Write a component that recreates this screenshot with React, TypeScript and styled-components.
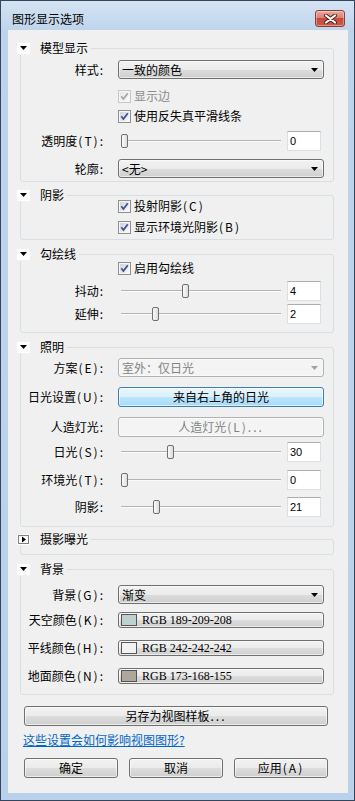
import React from 'react';
import styled, { createGlobalStyle } from 'styled-components';

const GlobalStyle = createGlobalStyle`
  html, body {
    margin: 0;
    padding: 0;
  }
  body {
    font-family: "Noto Sans CJK SC", "Noto Sans", sans-serif;
    font-size: 12px;
    line-height: 14px;
    color: #000;
    background: #fff;
  }
`;

// window chrome
const Window = styled.div`
  width: 355px;
  height: 801px;
  box-sizing: border-box;
  border: 1px solid #34455c;
  background: linear-gradient(#d5e3f3 0px, #bed4ec 30px, #b9d1ea 100%);
  display: flex;
  flex-direction: column;
`;

const TitleBar = styled.div`
  height: 29px;
  box-sizing: border-box;
  padding: 6px 9px 0 11px;
  display: flex;
  align-items: center;
  justify-content: space-between;
`;

const Title = styled.span`
  color: #000;
`;

const CloseButton = styled.div`
  width: 30px;
  height: 17px;
  box-sizing: border-box;
  border: 1px solid #8b3e39;
  border-radius: 3px;
  background: linear-gradient(#eaaa9f, #d88072 45%, #c44a3e 50%, #cc5a4c 100%);
  box-shadow: inset 0 0 0 1px rgba(255, 255, 255, 0.35);
  display: flex;
  align-items: center;
  justify-content: center;
`;

const Client = styled.div`
  flex: 1;
  margin: 0 6px 7px 7px;
  padding-top: 11px;
  background: #f0f0f0;
  display: flex;
  flex-direction: column;
`;

// group boxes
const Section = styled.section<{ $mt: number }>`
  display: flex;
  flex-direction: column;
  margin-top: ${(p) => p.$mt}px;
`;

const Header = styled.div`
  align-self: flex-start;
  position: relative;
  z-index: 1;
  height: 14px;
  margin: 0 0 -7px 9px;
  padding-right: 3px;
  display: flex;
  align-items: center;
  gap: 10px;
  background: #f0f0f0;
`;

const Toggle = styled.span`
  width: 13px;
  height: 11px;
  background: #fff;
  display: flex;
  align-items: center;
  justify-content: center;
`;

const Box = styled.div<{ $pt: number; $pb: number }>`
  margin: 0 14px 0 12px;
  min-height: 14px;
  border: 1px solid #d5dfe5;
  border-radius: 3px;
  padding: ${(p) => p.$pt}px 9px ${(p) => p.$pb}px 7px;
  display: flex;
  flex-direction: column;
`;

const Row = styled.div<{ $mt?: number; $h: number }>`
  display: flex;
  align-items: center;
  gap: 13px;
  height: ${(p) => p.$h}px;
  margin-top: ${(p) => p.$mt ?? 0}px;
`;

// right-aligned caption column; a caption that is too long is cut on its left
const Label = styled.div`
  width: 77px;
  height: 18px;
  flex: none;
  display: flex;
  align-items: center;
  justify-content: flex-end;
  overflow: hidden;
  white-space: nowrap;
  & > span {
    flex: none;
  }
`;

// the "(T):" tail of a caption, drawn as wide as the dialog's own font
const Mnemonic = styled.span`
  letter-spacing: 2px;
  margin-left: 1px;
`;

// controls
const CheckLabel = styled.label<{ $disabled?: boolean }>`
  display: flex;
  align-items: center;
  gap: 3px;
  color: ${(p) => (p.$disabled ? '#8d8d8d' : '#000')};
`;

const Select = styled.div<{ $disabled?: boolean }>`
  width: 206px;
  height: 19px;
  box-sizing: border-box;
  border: 1px solid ${(p) => (p.$disabled ? '#adb2b5' : '#707070')};
  border-radius: 3px;
  padding: 0 5px 0 3px;
  color: ${(p) => (p.$disabled ? '#838383' : '#000')};
  background: ${(p) =>
    p.$disabled
      ? '#f4f4f4'
      : 'linear-gradient(#f2f2f2, #ebebeb 50%, #dddddd 50%, #cfcfcf)'};
  box-shadow: inset 0 0 0 1px rgba(255, 255, 255, 0.55);
  display: flex;
  align-items: center;
  justify-content: space-between;
`;

const PushButton = styled.button<{ $kind?: 'hot' | 'off'; $w?: number }>`
  width: ${(p) => (p.$w ? `${p.$w}px` : '206px')};
  height: 20px;
  box-sizing: border-box;
  margin: 0;
  padding: 0;
  font: inherit;
  border-radius: 3px;
  border: 1px solid
    ${(p) => (p.$kind === 'hot' ? '#3c7fb1' : p.$kind === 'off' ? '#adb2b5' : '#707070')};
  color: ${(p) => (p.$kind === 'off' ? '#838383' : '#000')};
  background: ${(p) =>
    p.$kind === 'hot'
      ? 'linear-gradient(#eaf6fd, #d9f0fc 50%, #bee6fd 50%, #a7d9f5)'
      : p.$kind === 'off'
      ? '#f4f4f4'
      : 'linear-gradient(#f2f2f2, #ebebeb 50%, #dddddd 50%, #cfcfcf)'};
  box-shadow: inset 0 0 0 1px rgba(255, 255, 255, 0.6);
  display: flex;
  align-items: center;
  justify-content: center;
`;

const ColorButton = styled(PushButton)`
  height: 16px;
  justify-content: flex-start;
  padding-left: 2px;
  gap: 5px;
`;

const Swatch = styled.span<{ $c: string }>`
  width: 16px;
  height: 12px;
  box-sizing: border-box;
  border: 1px solid #555;
  background: ${(p) => p.$c};
`;

const RgbText = styled.span`
  font-family: "Liberation Serif", serif;
  font-size: 12px;
`;

const SliderGroup = styled.div`
  display: flex;
  align-items: center;
  gap: 6px;
`;

const Track = styled.div`
  position: relative;
  width: 160px;
  height: 16px;
  margin-left: 3px;
  &::before {
    content: '';
    position: absolute;
    left: 0;
    right: 0;
    top: 7px;
    height: 1px;
    background: #b4b4b4;
    border-bottom: 1px solid #fbfbfb;
  }
`;

const Thumb = styled.span`
  position: absolute;
  top: 1px;
  width: 7px;
  height: 14px;
  box-sizing: border-box;
  border: 1px solid #707070;
  border-radius: 2px;
  background: linear-gradient(90deg, #fafafa, #dcdcdc);
`;

const NumberBox = styled.input`
  width: 34px;
  height: 20px;
  box-sizing: border-box;
  margin: 0;
  padding: 0 0 0 2px;
  border: 1px solid #dbdfe6;
  border-top-color: #abadb3;
  background: #fff;
  font-family: "Liberation Sans", Arial, sans-serif;
  font-size: 11px;
  color: #000;
  outline: none;
`;

// bottom area
const Footer = styled.div`
  display: flex;
  flex-direction: column;
  margin: 11px 20px 0 16px;
`;

const HelpLink = styled.a`
  align-self: flex-start;
  margin: 7px 0 0 -1px;
  color: #0066cc;
  text-decoration: underline;
  cursor: pointer;
`;

const ButtonRow = styled.div`
  display: flex;
  gap: 11px;
  margin-top: 11px;
`;

// drawings
const DownArrow = ({ dim }: { dim?: boolean }) => (
  <svg width="7" height="4" viewBox="0 0 7 4">
    <polygon points="0,0 7,0 3.5,4" fill={dim ? '#a0a0a0' : '#000'} />
  </svg>
);

const OpenIcon = () => (
  <svg width="7" height="4" viewBox="0 0 7 4">
    <polygon points="0,0 7,0 3.5,4" fill="#000" />
  </svg>
);

const ClosedIcon = () => (
  <svg width="11" height="9" viewBox="0 0 11 9">
    <rect x="0.5" y="0.5" width="10" height="8" fill="none" stroke="#000" strokeDasharray="1 1" />
    <polygon points="4,1.5 8,4.5 4,7.5" fill="#000" />
  </svg>
);

const CloseX = () => (
  <svg width="13" height="10" viewBox="0 0 13 10">
    <path d="M2 1.5 L11 8.5 M11 1.5 L2 8.5" stroke="#5a1d18" strokeWidth="4" strokeLinecap="round" />
    <path d="M2 1.5 L11 8.5 M11 1.5 L2 8.5" stroke="#fff" strokeWidth="2.2" strokeLinecap="round" />
  </svg>
);

const CheckBox = ({ disabled }: { disabled?: boolean }) => (
  <svg width="13" height="13" viewBox="0 0 13 13">
    <defs>
      <linearGradient id={disabled ? 'cbd' : 'cbn'} x1="0" y1="0" x2="1" y2="1">
        <stop offset="0" stopColor={disabled ? '#e6e6e6' : '#cfd2d6'} />
        <stop offset="1" stopColor="#fbfbfb" />
      </linearGradient>
    </defs>
    <rect x="0.5" y="0.5" width="12" height="12" fill="#f6f6f6" stroke={disabled ? '#c6c6c6' : '#8e8f8f'} />
    <rect x="2" y="2" width="9" height="9" fill={`url(#${disabled ? 'cbd' : 'cbn'})`} />
    <path
      d="M3.3 6.3 L5.4 9 L9.8 3.2"
      fill="none"
      stroke={disabled ? '#a9a9a9' : '#3c52a0'}
      strokeWidth="1.8"
    />
  </svg>
);

// splits "透明度(T):" into its CJK words and its ascii tail
const Caption = ({ text }: { text: string }) => {
  const m = text.match(/^(.*?)([\x20-\x7e]*)$/);
  const head = m ? m[1] : text;
  const tail = m ? m[2] : '';
  return (
    <span>
      {head}
      {tail && <Mnemonic>{tail}</Mnemonic>}
    </span>
  );
};

const Check = ({ text, disabled }: { text: string; disabled?: boolean }) => (
  <CheckLabel $disabled={disabled}>
    <CheckBox disabled={disabled} />
    <Caption text={text} />
  </CheckLabel>
);

const Slider = ({ value, max }: { value: number; max: number }) => (
  <SliderGroup>
    <Track>
      <Thumb style={{ left: Math.round((value / max) * 153) }} />
    </Track>
    <NumberBox readOnly value={String(value)} />
  </SliderGroup>
);

const Field = ({ label, children }: { label?: string; children: React.ReactNode }) => (
  <>
    <Label>{label ? <Caption text={label} /> : <span />}</Label>
    {children}
  </>
);

const App: React.FC = () => (
  <>
    <GlobalStyle />
    <Window>
      <TitleBar>
        <Title>图形显示选项</Title>
        <CloseButton>
          <CloseX />
        </CloseButton>
      </TitleBar>
      <Client>
        <Section $mt={0}>
          <Header>
            <Toggle><OpenIcon /></Toggle>
            <span>模型显示</span>
          </Header>
          <Box $pt={11} $pb={3}>
            <Row $h={19}>
              <Field label="样式:">
                <Select>
                  <span>一致的颜色</span>
                  <DownArrow />
                </Select>
              </Field>
            </Row>
            <Row $h={16} $mt={9}>
              <Field>
                <Check text="显示边" disabled />
              </Field>
            </Row>
            <Row $h={16} $mt={4}>
              <Field>
                <Check text="使用反失真平滑线条" />
              </Field>
            </Row>
            <Row $h={20} $mt={7}>
              <Field label="透明度(T):">
                <Slider value={0} max={100} />
              </Field>
            </Row>
            <Row $h={19} $mt={8}>
              <Field label="轮廓:">
                <Select>
                  <span>&lt;无&gt;</span>
                  <DownArrow />
                </Select>
              </Field>
            </Row>
          </Box>
        </Section>

        <Section $mt={6}>
          <Header>
            <Toggle><OpenIcon /></Toggle>
            <span>阴影</span>
          </Header>
          <Box $pt={2} $pb={4}>
            <Row $h={16}>
              <Field>
                <Check text="投射阴影(C)" />
              </Field>
            </Row>
            <Row $h={16} $mt={5}>
              <Field>
                <Check text="显示环境光阴影(B)" />
              </Field>
            </Row>
          </Box>
        </Section>

        <Section $mt={7}>
          <Header>
            <Toggle><OpenIcon /></Toggle>
            <span>勾绘线</span>
          </Header>
          <Box $pt={5} $pb={8}>
            <Row $h={16}>
              <Field>
                <Check text="启用勾绘线" />
              </Field>
            </Row>
            <Row $h={20} $mt={5}>
              <Field label="抖动:">
                <Slider value={4} max={10} />
              </Field>
            </Row>
            <Row $h={20} $mt={3}>
              <Field label="延伸:">
                <Slider value={2} max={10} />
              </Field>
            </Row>
          </Box>
        </Section>

        <Section $mt={7}>
          <Header>
            <Toggle><OpenIcon /></Toggle>
            <span>照明</span>
          </Header>
          <Box $pt={10} $pb={9}>
            <Row $h={19}>
              <Field label="方案(E):">
                <Select $disabled>
                  <span>室外：仅日光</span>
                  <DownArrow dim />
                </Select>
              </Field>
            </Row>
            <Row $h={20} $mt={10}>
              <Field label="日光设置(U):">
                <PushButton $kind="hot">来自右上角的日光</PushButton>
              </Field>
            </Row>
            <Row $h={20} $mt={10}>
              <Field label="人造灯光:">
                <PushButton $kind="off">
                  <Caption text="人造灯光(L)..." />
                </PushButton>
              </Field>
            </Row>
            <Row $h={20} $mt={5}>
              <Field label="日光(S):">
                <Slider value={30} max={100} />
              </Field>
            </Row>
            <Row $h={20} $mt={8}>
              <Field label="环境光(T):">
                <Slider value={0} max={100} />
              </Field>
            </Row>
            <Row $h={20} $mt={7}>
              <Field label="阴影:">
                <Slider value={21} max={100} />
              </Field>
            </Row>
          </Box>
        </Section>

        <Section $mt={5}>
          <Header>
            <Toggle><ClosedIcon /></Toggle>
            <span>摄影曝光</span>
          </Header>
          <Box $pt={0} $pb={0} />
        </Section>

        <Section $mt={7}>
          <Header>
            <Toggle><OpenIcon /></Toggle>
            <span>背景</span>
          </Header>
          <Box $pt={15} $pb={10}>
            <Row $h={19}>
              <Field label="背景(G):">
                <Select>
                  <span>渐变</span>
                  <DownArrow />
                </Select>
              </Field>
            </Row>
            <Row $h={16} $mt={8}>
              <Field label="天空颜色(K):">
                <ColorButton>
                  <Swatch $c="rgb(189,209,208)" />
                  <RgbText>RGB 189-209-208</RgbText>
                </ColorButton>
              </Field>
            </Row>
            <Row $h={16} $mt={12}>
              <Field label="地平线颜色(H):">
                <ColorButton>
                  <Swatch $c="rgb(242,242,242)" />
                  <RgbText>RGB 242-242-242</RgbText>
                </ColorButton>
              </Field>
            </Row>
            <Row $h={16} $mt={12}>
              <Field label="地面颜色(N):">
                <ColorButton>
                  <Swatch $c="rgb(173,168,155)" />
                  <RgbText>RGB 173-168-155</RgbText>
                </ColorButton>
              </Field>
            </Row>
          </Box>
        </Section>

        <Footer>
          <PushButton $w={304}>
            <Caption text="另存为视图样板..." />
          </PushButton>
          <HelpLink>这些设置会如何影响视图图形?</HelpLink>
          <ButtonRow>
            <PushButton $w={94}>确定</PushButton>
            <PushButton $w={94}>取消</PushButton>
            <PushButton $w={94}>
              <Caption text="应用(A)" />
            </PushButton>
          </ButtonRow>
        </Footer>
      </Client>
    </Window>
  </>
);

export default App;
